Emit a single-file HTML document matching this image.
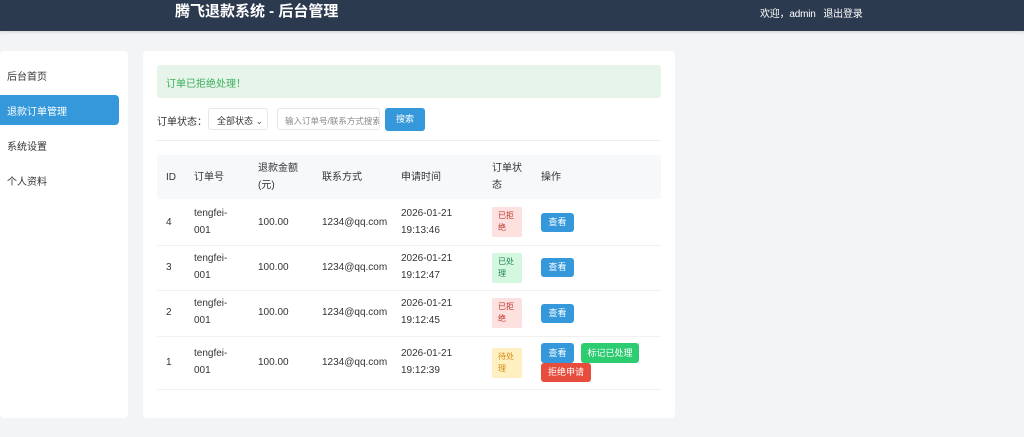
<!DOCTYPE html>
<html><head><meta charset="utf-8"><style>
*{margin:0;padding:0;box-sizing:border-box}
body{width:1024px;height:437px;background:#f3f4f6;font-family:"Liberation Sans","Noto Sans CJK SC",sans-serif;font-size:10px;color:#333;position:relative;overflow:hidden}
.a{position:absolute;white-space:nowrap}
.hdr{left:0;top:0;width:1024px;height:31px;background:#2c3a4f;box-shadow:0 1px 3px rgba(0,0,0,.15)}
.card{background:#fff;border-radius:4px}
.btn{position:absolute;color:#fff;border-radius:3px;font-size:9px;text-align:center}
.tag{position:absolute;width:30px;height:30px;border-radius:2px;font-size:8px;padding:3px 0 0 6px;line-height:12px;white-space:normal}
.t{position:absolute;line-height:17px;white-space:nowrap}
</style></head><body>
<div class="a hdr"></div>
<div class="a" style="left:175px;top:2px;color:#fff;font-size:15px;font-weight:bold;line-height:20px">腾飞退款系统 - 后台管理</div>
<div class="a" style="left:760px;top:5px;color:#fff;font-size:10px;letter-spacing:-0.2px">欢迎，admin&nbsp;&nbsp;&nbsp;退出登录</div>

<div class="a card" style="left:0;top:51px;width:128px;height:367px"></div>
<div class="a" style="left:7px;top:68px">后台首页</div>
<div class="a" style="left:0;top:95px;width:119px;height:30px;background:#3498db;border-radius:0 4px 4px 0"></div>
<div class="a" style="left:7px;top:103px;color:#fff">退款订单管理</div>
<div class="a" style="left:7px;top:138px">系统设置</div>
<div class="a" style="left:7px;top:173px">个人资料</div>

<div class="a card" style="left:143px;top:51px;width:532px;height:367px"></div>
<div class="a" style="left:157px;top:65px;width:504px;height:33px;background:#e6f4e9;border-radius:3px"></div>
<div class="a" style="left:166px;top:75px;color:#3cae5c;font-size:10px">订单已拒绝处理！</div>

<div class="a" style="left:157px;top:113px">订单状态：</div>
<div class="a" style="left:208px;top:108px;width:60px;height:22px;border:1px solid #e5e7eb;border-radius:3px;font-size:9px;padding:5px 0 0 8px">全部状态 <span style="color:#555">&#8964;</span></div>
<div class="a" style="left:277px;top:108px;width:103px;height:22px;border:1px solid #e5e7eb;border-radius:3px;font-size:8.5px;color:#888;padding:6px 0 0 7px;overflow:hidden">输入订单号/联系方式搜索</div>
<div class="btn" style="left:385px;top:108px;width:40px;height:23px;background:#3498db;line-height:23px">搜索</div>
<div class="a" style="left:157px;top:140px;width:504px;height:1px;background:#eee"></div>

<div class="a" style="left:157px;top:155px;width:504px;height:44px;background:#f7f8fa"></div>
<div class="t" style="left:166px;top:169px">ID</div>
<div class="t" style="left:194px;top:169px">订单号</div>
<div class="t" style="left:258px;top:160px">退款金额<br>(元)</div>
<div class="t" style="left:322px;top:169px">联系方式</div>
<div class="t" style="left:401px;top:169px">申请时间</div>
<div class="t" style="left:492px;top:160px">订单状<br>态</div>
<div class="t" style="left:541px;top:169px">操作</div>

<div class="a" style="left:157px;top:245px;width:504px;height:1px;background:#f1f1f1"></div>
<div class="a" style="left:157px;top:290px;width:504px;height:1px;background:#f1f1f1"></div>
<div class="a" style="left:157px;top:336px;width:504px;height:1px;background:#f1f1f1"></div>
<div class="a" style="left:157px;top:389px;width:504px;height:1px;background:#f1f1f1"></div>

<div class="t" style="left:166px;top:214px">4</div>
<div class="t" style="left:194px;top:205px">tengfei-<br>001</div>
<div class="t" style="left:258px;top:214px">100.00</div>
<div class="t" style="left:322px;top:214px">1234@qq.com</div>
<div class="t" style="left:401px;top:205px">2026-01-21<br>19:13:46</div>
<div class="tag" style="left:492px;top:207px;background:#fde0e0;color:#c0392b">已拒<br>绝</div>
<div class="btn" style="left:541px;top:213px;width:33px;height:19px;background:#3498db;line-height:19px">查看</div>

<div class="t" style="left:166px;top:259px">3</div>
<div class="t" style="left:194px;top:250px">tengfei-<br>001</div>
<div class="t" style="left:258px;top:259px">100.00</div>
<div class="t" style="left:322px;top:259px">1234@qq.com</div>
<div class="t" style="left:401px;top:250px">2026-01-21<br>19:12:47</div>
<div class="tag" style="left:492px;top:253px;background:#d4f7e2;color:#1e8449">已处<br>理</div>
<div class="btn" style="left:541px;top:258px;width:33px;height:19px;background:#3498db;line-height:19px">查看</div>

<div class="t" style="left:166px;top:304px">2</div>
<div class="t" style="left:194px;top:295px">tengfei-<br>001</div>
<div class="t" style="left:258px;top:304px">100.00</div>
<div class="t" style="left:322px;top:304px">1234@qq.com</div>
<div class="t" style="left:401px;top:295px">2026-01-21<br>19:12:45</div>
<div class="tag" style="left:492px;top:298px;background:#fde0e0;color:#c0392b">已拒<br>绝</div>
<div class="btn" style="left:541px;top:304px;width:33px;height:19px;background:#3498db;line-height:19px">查看</div>

<div class="t" style="left:166px;top:354px">1</div>
<div class="t" style="left:194px;top:345px">tengfei-<br>001</div>
<div class="t" style="left:258px;top:354px">100.00</div>
<div class="t" style="left:322px;top:354px">1234@qq.com</div>
<div class="t" style="left:401px;top:345px">2026-01-21<br>19:12:39</div>
<div class="tag" style="left:492px;top:348px;background:#fff0c2;color:#d68910">待处<br>理</div>
<div class="btn" style="left:541px;top:343px;width:33px;height:20px;background:#3498db;line-height:20px">查看</div>
<div class="btn" style="left:581px;top:343px;width:58px;height:20px;background:#2ecc71;line-height:20px">标记已处理</div>
<div class="btn" style="left:541px;top:363px;width:50px;height:19px;background:#e74c3c;line-height:19px">拒绝申请</div>
</body></html>
